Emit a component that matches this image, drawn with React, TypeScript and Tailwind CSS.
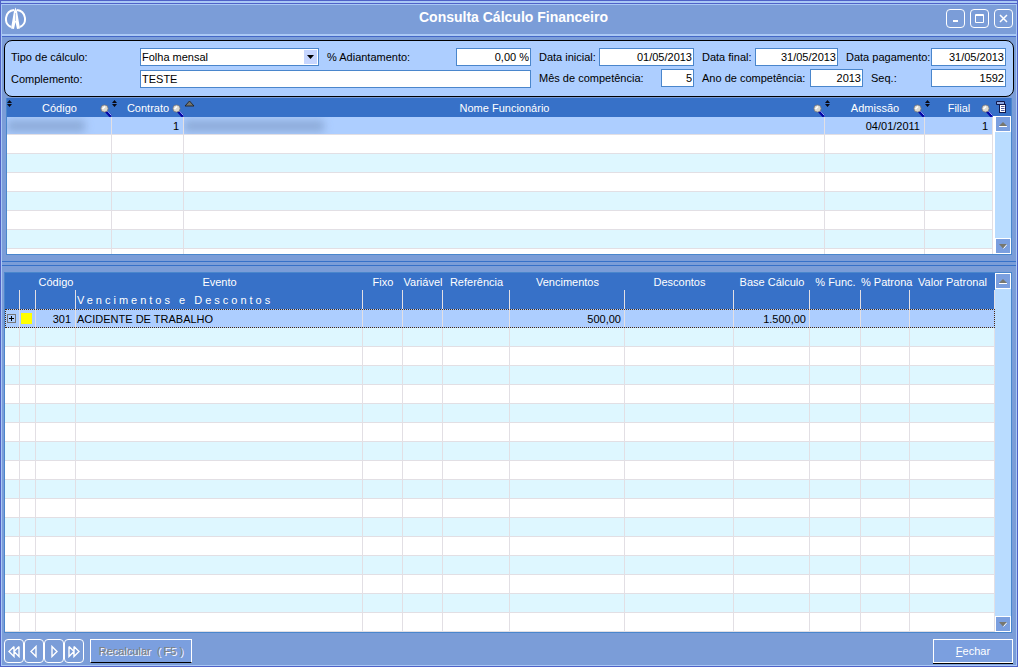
import type { ReactNode } from 'react'
import clsx from 'clsx'

type Event = {
  code: string
  name: string
  earnings: string
  base: string
}

const events: (Event | null)[] = [
  { code: '301', name: 'ACIDENTE DE TRABALHO', earnings: '500,00', base: '1.500,00' },
  ...Array<null>(16).fill(null),
]

const eventHeaders = [
  { label: '', col: 'w-[15px]' },
  { label: '', col: 'w-[16px]' },
  { label: 'Código', col: 'w-[40px]' },
  { label: 'Evento', col: 'w-auto' },
  { label: 'Fixo', col: 'w-[40px]' },
  { label: 'Variável', col: 'w-[40px]' },
  { label: 'Referência', col: 'w-[67px]' },
  { label: 'Vencimentos', col: 'w-[115px]' },
  { label: 'Descontos', col: 'w-[109px]' },
  { label: 'Base Cálculo', col: 'w-[76px]' },
  { label: '% Func.', col: 'w-[51px]' },
  { label: '% Patrona', col: 'w-[49px]' },
  { label: 'Valor Patronal', col: 'w-[85px]' },
]

const employeeHeaders = [
  { label: 'Código', col: 'w-[105px]', sort: 'both' },
  { label: 'Contrato', col: 'w-[72px]', sort: 'both' },
  { label: 'Nome Funcionário', col: 'w-auto', sort: 'up' },
  { label: 'Admissão', col: 'w-[100px]', sort: 'both' },
  { label: 'Filial', col: 'w-[68px]', sort: 'both' },
]

function Logo() {
  return (
    <svg width="22" height="24" viewBox="0 0 22 24" fill="none" stroke="white" aria-hidden="true">
      <path d="M9 3A9 9 0 0 0 6 20M12 3A9 9 0 0 1 15 20" strokeWidth="2" />
      <path d="M10.500 0.500L9 4L6 21.500L9 22L10.500 15L12 22L15 21.500L12 4Z" fill="white" stroke="none" />
      <path d="M10.500 6V14" stroke="#7b9dd8" strokeWidth="0.500" />
    </svg>
  )
}

function Magnifier() {
  return (
    <svg width="12" height="13" viewBox="0 0 12 13" aria-hidden="true">
      <path d="M6 7L11 12.500" stroke="#0505a8" strokeWidth="3" />
      <path d="M7 6.500L11.500 11.500" stroke="#9fc0ff" />
      <circle cx="4.500" cy="4.500" r="3.600" fill="#dcd9d0" stroke="#77777c" strokeWidth="0.800" />
      <path d="M2.500 5L5 2.500" stroke="white" strokeWidth="1.600" />
    </svg>
  )
}

function SortIcon({ kind }: { kind: string }) {
  if (kind === 'up') {
    return (
      <svg width="11" height="7" viewBox="0 0 11 7" aria-hidden="true">
        <path d="M1 6L5.500 1L10 6Z" fill="#77776f" stroke="#222" strokeWidth="0.900" />
      </svg>
    )
  }
  return (
    <svg width="5" height="7" viewBox="0 0 5 7" aria-hidden="true">
      <path d="M0 3L2.500 0L5 3ZM0 4L2.500 7L5 4Z" fill="#0a0a14" />
    </svg>
  )
}

function ColumnsIcon() {
  return (
    <svg width="12" height="13" viewBox="0 0 12 13" aria-hidden="true">
      <path d="M0.500 3.500V0.500H8.500V3.500Z" fill="#8fa8e0" stroke="#10184a" />
      <rect x="3.500" y="3.500" width="6" height="8" fill="white" stroke="#10184a" />
      <path d="M5 5.500H8.500M5 7.500H8.500M5 9.500H8.500" stroke="#5560a0" />
    </svg>
  )
}

function ScrollButton({ dir }: { dir: 'up' | 'down' }) {
  return (
    <button
      aria-label={dir === 'up' ? 'Rolar para cima' : 'Rolar para baixo'}
      className="flex h-4 w-4 shrink-0 items-center justify-center border border-white bg-[#7b9fdf]"
    >
      <svg width="8" height="5" viewBox="0 0 8 5" aria-hidden="true">
        {dir === 'up' ? (
          <>
            <path d="M0 4L4 0L8 4Z" fill="#77776f" />
            <path d="M0 4.500H8" stroke="white" />
          </>
        ) : (
          <>
            <path d="M0 0H8L4 4.500Z" fill="#77776f" />
            <path d="M4.500 4.500L8 0.500" stroke="white" />
          </>
        )}
      </svg>
    </button>
  )
}

function Scrollbar() {
  return (
    <div className="flex w-4 shrink-0 flex-col justify-between bg-[#b9dcff]">
      <ScrollButton dir="up" />
      <ScrollButton dir="down" />
    </div>
  )
}

function WindowButton({ label, children }: { label: string; children: ReactNode }) {
  return (
    <button
      aria-label={label}
      className="flex h-[19px] w-[19px] items-center justify-center rounded border border-white"
    >
      <svg width="11" height="11" viewBox="0 0 11 11" fill="none" stroke="white" aria-hidden="true">
        {children}
      </svg>
    </button>
  )
}

function NavButton({ label, path }: { label: string; path: string }) {
  return (
    <button
      aria-label={label}
      className="flex h-6 w-5 items-center justify-center rounded border border-white"
    >
      <svg width="14" height="13" viewBox="0 0 14 13" fill="none" stroke="white" strokeWidth="1.400" aria-hidden="true">
        <path d={path} />
      </svg>
    </button>
  )
}

function Field({ id, label, labelWidth, width, value }: {
  id: string
  label: string
  labelWidth: string
  width: string
  value: string
}) {
  return (
    <>
      <label htmlFor={id} className={clsx('shrink-0 pl-2 whitespace-nowrap', labelWidth)}>
        {label}
      </label>
      <input
        id={id}
        defaultValue={value}
        className={clsx('h-[18px] shrink-0 border border-[#4a86cc] bg-white pr-px text-right outline-none', width)}
      />
    </>
  )
}

function Filters() {
  return (
    <form className="mx-[2px] mb-px flex h-[57px] rounded-lg border border-black bg-[#adceff] pt-[7px] pr-[7px] pl-[6px]">
      <div className="flex flex-1 flex-col gap-1">
        <div className="flex h-[18px] items-center">
          <label htmlFor="tipo" className="w-[129px] shrink-0">Tipo de cálculo:</label>
          <div className="relative h-[18px] w-[179px]">
            <select
              id="tipo"
              className="block h-[18px] w-full appearance-none border border-[#4a86cc] bg-white pl-px outline-none"
            >
              <option>Folha mensal</option>
            </select>
            <span className="pointer-events-none absolute top-[2px] right-[2px] flex h-[14px] w-[13px] items-center justify-center bg-[#c6d6ff]">
              <svg width="7" height="4" viewBox="0 0 7 4" aria-hidden="true">
                <path d="M0 0H7L3.500 4Z" fill="black" />
              </svg>
            </span>
          </div>
          <label htmlFor="adiantamento" className="flex-1 pl-2 whitespace-nowrap">% Adiantamento:</label>
          <input
            id="adiantamento"
            defaultValue="0,00 %"
            className="h-[18px] w-[75px] border border-[#4a86cc] bg-white pr-px text-right outline-none"
          />
        </div>
        <div className="flex h-[18px] items-center">
          <label htmlFor="complemento" className="w-[129px] shrink-0">Complemento:</label>
          <input
            id="complemento"
            defaultValue="TESTE"
            className="h-[18px] min-w-0 flex-1 border border-[#4a86cc] bg-white pl-px outline-none"
          />
        </div>
      </div>
      <div className="flex shrink-0 flex-col gap-[3px]">
        <div className="flex h-[18px] items-center">
          <Field id="inicial" label="Data inicial:" labelWidth="w-[68px]" width="w-[95px]" value="01/05/2013" />
          <Field id="final" label="Data final:" labelWidth="w-[61px]" width="w-[83px]" value="31/05/2013" />
          <Field id="pagamento" label="Data pagamento:" labelWidth="w-[93px]" width="w-[75px]" value="31/05/2013" />
        </div>
        <div className="flex h-[18px] items-center">
          <Field id="mes" label="Mês de competência:" labelWidth="w-[130px]" width="w-[33px]" value="5" />
          <Field id="ano" label="Ano de competência:" labelWidth="w-[116px]" width="w-[53px]" value="2013" />
          <Field id="seq" label="Seq.:" labelWidth="w-[68px]" width="w-[75px]" value="1592" />
        </div>
      </div>
    </form>
  )
}

const cell = 'border-r border-b border-[#e2dfe4] p-0'

function EmployeeGrid() {
  return (
    <div className="mx-1 flex h-[157px] border border-t-0 border-[#4a86cc] bg-white">
      <div className="min-w-0 flex-1 overflow-hidden bg-white">
        <table className="w-full table-fixed border-separate border-spacing-0">
          <thead>
            <tr className="h-[19px] bg-[#3771c8] text-white">
              {employeeHeaders.map((h) => (
                <th key={h.label} className={clsx('relative p-0 font-normal', h.col)}>
                  {h.label}
                  <span className="absolute top-[2px] left-0"><SortIcon kind={h.sort} /></span>
                  <span className="absolute right-0 bottom-0"><Magnifier /></span>
                </th>
              ))}
            </tr>
          </thead>
          <tbody>
            <tr className="h-[18px] bg-[#adceff]">
              <td className={clsx(cell, 'overflow-hidden')}>
                <div className="h-3 w-[78px] bg-[#8dabd9] blur-[4px]" />
              </td>
              <td className={clsx(cell, 'pr-1 text-right')}>1</td>
              <td className={clsx(cell, 'overflow-hidden')}>
                <div className="h-3 w-[140px] bg-[#8dabd9] blur-[4px]" />
              </td>
              <td className={clsx(cell, 'pr-1 text-right')}>04/01/2011</td>
              <td className={clsx(cell, 'pr-1 text-right')}>1</td>
            </tr>
            {Array.from({ length: 7 }, (_, i) => (
              <tr key={i} className={clsx('h-[19px]', i % 2 ? 'bg-[#def7ff]' : 'bg-white')}>
                {employeeHeaders.map((h) => (
                  <td key={h.label} className={cell} />
                ))}
              </tr>
            ))}
          </tbody>
        </table>
      </div>
      <div className="flex flex-col">
        <div className="flex h-[18px] w-[18px] items-center justify-center bg-[#3771c8]">
          <ColumnsIcon />
        </div>
        <div className="flex flex-1 pl-[2px]">
          <Scrollbar />
        </div>
      </div>
    </div>
  )
}

function EventGrid() {
  return (
    <div className="mr-1 ml-[2px] flex border border-[#4a86cc] bg-[#b9dcff]">
      <div className="min-w-0 flex-1">
        <table className="w-full table-fixed border-separate border-spacing-0">
          <thead className="bg-[#3771c8] text-white">
            <tr className="h-[17px]">
              {eventHeaders.map((h, i) => (
                <th key={i} className={clsx('p-0 font-normal whitespace-nowrap', h.col)}>
                  {h.label}
                </th>
              ))}
            </tr>
            <tr className="h-[19px]">
              {eventHeaders.map((h, i) => (
                <th
                  key={i}
                  className="border-r border-[#e2dfe4] p-0 pl-px text-left font-normal tracking-[3px] whitespace-nowrap"
                >
                  {h.label === 'Evento' && 'Vencimentos e Descontos'}
                </th>
              ))}
            </tr>
          </thead>
          <tbody>
            {events.map((e, i) =>
              e ? (
                <tr
                  key={i}
                  className="h-[19px] bg-[#adceff] outline-1 -outline-offset-1 outline-dotted outline-[#4a2a10]"
                >
                  <td className="border-r border-[#e2dfe4] p-0">
                    <button
                      aria-label="Expandir"
                      className="ml-[2px] flex h-[9px] w-[9px] items-center justify-center border border-[#777]"
                    >
                      <svg width="5" height="5" viewBox="0 0 5 5" stroke="black" aria-hidden="true">
                        <path d="M0 2.500H5M2.500 0V5" />
                      </svg>
                    </button>
                  </td>
                  <td className="border-r border-[#e2dfe4] p-0">
                    <div className="ml-px h-[11px] w-[11px] bg-[#ffff00]" />
                  </td>
                  <td className="border-r border-[#e2dfe4] p-0 pr-1 text-right">{e.code}</td>
                  <td className="border-r border-[#e2dfe4] p-0 pl-px">{e.name}</td>
                  <td className="border-r border-[#e2dfe4] p-0" />
                  <td className="border-r border-[#e2dfe4] p-0" />
                  <td className="border-r border-[#e2dfe4] p-0" />
                  <td className="border-r border-[#e2dfe4] p-0 pr-[3px] text-right">{e.earnings}</td>
                  <td className="border-r border-[#e2dfe4] p-0" />
                  <td className="border-r border-[#e2dfe4] p-0 pr-[3px] text-right">{e.base}</td>
                  <td className="border-r border-[#e2dfe4] p-0" />
                  <td className="border-r border-[#e2dfe4] p-0" />
                  <td className="p-0" />
                </tr>
              ) : (
                <tr key={i} className={clsx('h-[19px]', i % 2 ? 'bg-[#def7ff]' : 'bg-white')}>
                  {eventHeaders.map((_, c) => (
                    <td key={c} className={cell} />
                  ))}
                </tr>
              ),
            )}
          </tbody>
        </table>
      </div>
      <Scrollbar />
    </div>
  )
}

export default function App() {
  return (
    <main className="flex min-h-screen flex-col border border-[#4f62c8] bg-[#7b9dd8] font-['Liberation_Sans',Arial,sans-serif] text-[11px] leading-4 text-black">
      {/* Barra de título */}
      <div className="h-[3px] border-b border-[#4f62c8] bg-[#a9c8f5]" />
      <header className="flex h-[32px] items-center border-x border-t border-b-2 border-[#a9c8f5] px-[3px] pb-[2px]">
        <Logo />
        <h1 className="flex-1 pb-1 pl-[54px] text-center text-sm leading-4 font-bold text-white">
          Consulta Cálculo Financeiro
        </h1>
        <div className="flex gap-[5px]">
          <WindowButton label="Minimizar"><path d="M3 8H8" strokeWidth="2" /></WindowButton>
          <WindowButton label="Maximizar"><path d="M1.500 1.500H9.500V9.500H1.500ZM1.500 2.500H9.500" /></WindowButton>
          <WindowButton label="Fechar janela"><path d="M2 2L9 9M9 2L2 9" strokeWidth="1.500" /></WindowButton>
        </div>
      </header>

      <div className="flex flex-1 flex-col border border-t-0 border-[#a9c8f5]">
        <div className="mb-[3px] h-px bg-[#4468c8]" />
        <Filters />
        <EmployeeGrid />

        {/* Divisor entre as grades */}
        <div className="my-[6px] h-[5px] border-y border-[#3771c8]" />

        <EventGrid />

        <footer className="flex items-start justify-between pt-[6px] pr-[3px] pb-px pl-[2px]">
          <div className="flex items-start">
            <NavButton label="Primeiro" path="M7 1.500L2 6.500L7 11.500V1.500M12 1.500L7 6.500L12 11.500V1.500" />
            <NavButton label="Anterior" path="M9 1.500L4 6.500L9 11.500Z" />
            <NavButton label="Próximo" path="M5 1.500L10 6.500L5 11.500Z" />
            <NavButton label="Último" path="M2 1.500L7 6.500L2 11.500V1.500M7 1.500L12 6.500L7 11.500V1.500" />
            <button
              disabled
              className="ml-[6px] h-6 w-[102px] border border-b-black border-white bg-[#7b9fdf] whitespace-pre text-[#808080] [text-shadow:1px_1px_0_white]"
            >
              Recalcular  ( F5 )
            </button>
          </div>
          <button className="h-6 w-20 border border-white bg-[#7b9fdf] text-white shadow-[0_1px_0_black]">
            <span className="underline">F</span>echar
          </button>
        </footer>
      </div>
    </main>
  )
}
